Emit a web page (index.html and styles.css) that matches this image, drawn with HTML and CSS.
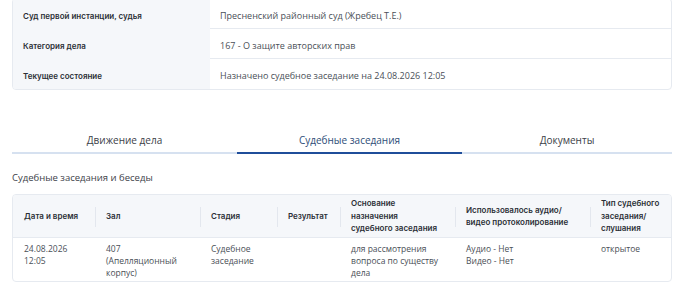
FILE: index.html
```html
<!DOCTYPE html>
<html lang="ru">
<head>
    <meta charset="UTF-8">
    <meta name="viewport" content="width=device-width, initial-scale=1.0">
    <title>Карточка дела</title>
    <link rel="stylesheet" href="styles.css">
</head>
<body>
    <div class="page">
        <div class="info-card">
            <div class="info-row">
                <div class="info-label">Суд первой инстанции, судья</div>
                <div class="info-value">Пресненский районный суд (Жребец Т.Е.)</div>
            </div>
            <div class="info-row">
                <div class="info-label">Категория дела</div>
                <div class="info-value">167 - О защите авторских прав</div>
            </div>
            <div class="info-row">
                <div class="info-label">Текущее состояние</div>
                <div class="info-value">Назначено судебное заседание на 24.08.2026 12:05</div>
            </div>
        </div>

        <div class="tabs">
            <div class="tab">Движение дела</div>
            <div class="tab active">Судебные заседания</div>
            <div class="tab">Документы</div>
        </div>

        <h2 class="section-title">Судебные заседания и беседы</h2>

        <div class="table-card">
            <div class="table-row table-head">
                <div class="cell">Дата и время</div>
                <div class="cell">Зал</div>
                <div class="cell">Стадия</div>
                <div class="cell">Результат</div>
                <div class="cell">Основание<br>назначения<br>судебного заседания</div>
                <div class="cell">Использовалось аудио/ видео протоколирование</div>
                <div class="cell">Тип судебного заседания/ слушания</div>
            </div>
            <div class="table-row table-body">
                <div class="cell">24.08.2026<br>12:05</div>
                <div class="cell">407<br>(Апелляционный корпус)</div>
                <div class="cell">Судебное заседание</div>
                <div class="cell"></div>
                <div class="cell">для рассмотрения вопроса по существу дела</div>
                <div class="cell">Аудио - Нет<br>Видео - Нет</div>
                <div class="cell">открытое</div>
            </div>
        </div>
    </div>
</body>
</html>
```

FILE: styles.css
```css
body {
    margin: 0;
    padding: 0;
    background-color: #fff;
    font-family: 'Open Sans', 'Noto Sans', sans-serif;
    color: #4a4a4a;
}

.page {
    padding: 0 28px 0 12px;
}

.info-card {
    margin-top: -2px;
    border: 1px solid #e6eaf0;
    border-radius: 4px;
    overflow: hidden;
}

.info-row {
    display: grid;
    grid-template-columns: 197px 1fr;
    height: 30px;
}

.info-label {
    display: flex;
    align-items: center;
    padding: 3px 0 0 10px;
    background-color: #f5f7fa;
    font-family: Inter, sans-serif;
    font-weight: 600;
    font-size: 8px;
    color: #2b2f36;
}

.info-value {
    display: flex;
    align-items: center;
    padding: 3px 0 0 10px;
    font-size: 9px;
    color: #4a4f57;
    border-bottom: 1px solid #e6eaf0;
}

.info-row:last-child .info-value {
    border-bottom: none;
}

.tabs {
    display: grid;
    grid-template-columns: 225px 225px 1fr;
    margin-top: 28px;
}

.tab {
    height: 29px;
    padding-bottom: 5px;
    display: flex;
    align-items: flex-end;
    justify-content: center;
    font-size: 10px;
    color: #3c4048;
    border-bottom: 2px solid #d6e1f0;
}

.tab.active {
    color: #2e4d78;
    border-bottom-color: #1f4d9a;
}

.section-title {
    margin: 17px 0 10px;
    font-size: 9.5px;
    font-weight: 400;
    color: #3c4048;
}

.table-card {
    border: 1px solid #e6eaf0;
    border-radius: 4px;
    overflow: hidden;
}

.table-row {
    display: grid;
    grid-template-columns: 82px 105px 77px 63px 115px 135px 1fr;
}

.table-head {
    background-color: #f5f7fa;
    border-bottom: 1px solid #e6eaf0;
    height: 42px;
}

.table-head .cell {
    position: relative;
    display: flex;
    align-items: center;
    font-family: Inter, sans-serif;
    font-weight: 600;
    font-size: 8px;
    line-height: 12.5px;
    color: #2b2f36;
}

.table-head .cell + .cell::before {
    content: "";
    position: absolute;
    left: 0;
    top: 12px;
    height: 20px;
    border-left: 1px solid #e3e7ee;
}

.cell {
    padding: 0 6px 0 11px;
}

.table-body .cell {
    padding-top: 5px;
    padding-bottom: 2px;
    font-size: 8.5px;
    line-height: 12px;
    color: #4a4f57;
}
```
